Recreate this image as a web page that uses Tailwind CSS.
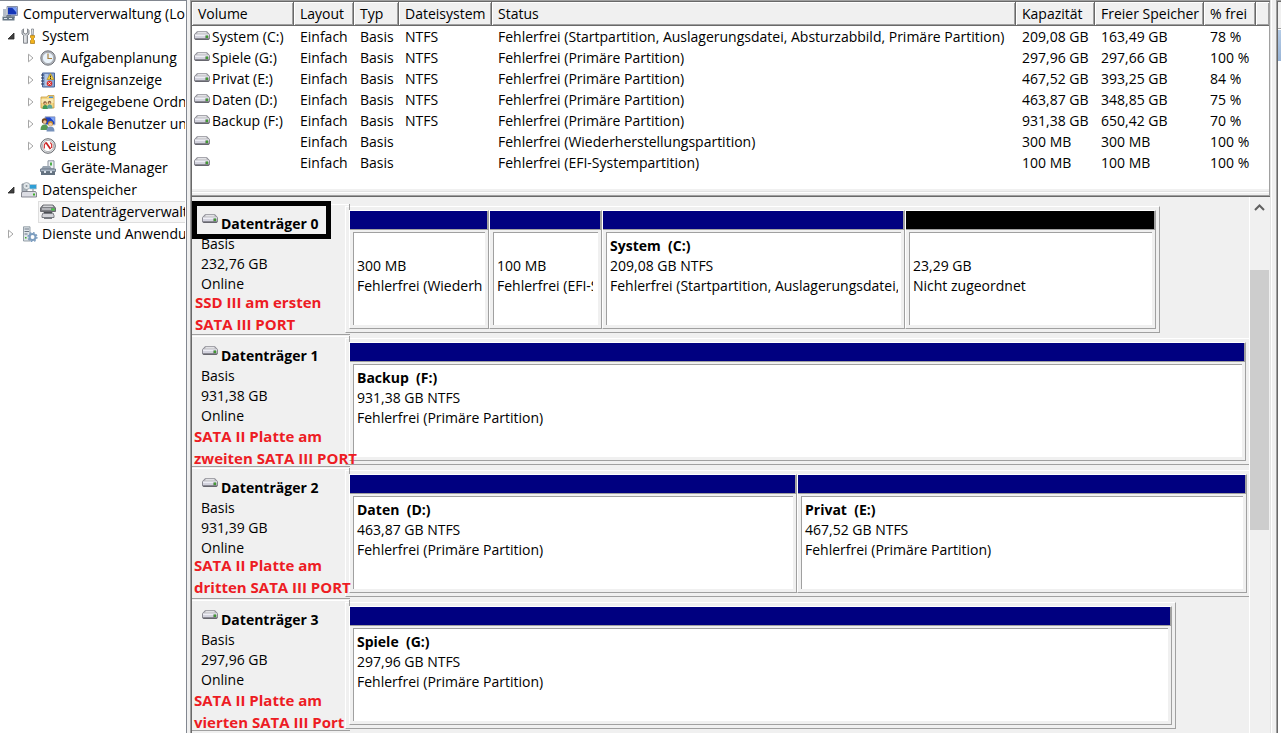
<!DOCTYPE html>
<html lang="de">
<head>
<meta charset="utf-8">
<title>Computerverwaltung</title>
<script src="https://cdn.jsdelivr.net/npm/@tailwindcss/browser@4"></script>
</head>
<body class="font-['Open_Sans','Noto_Sans',sans-serif] text-[14px] leading-5 text-black bg-[#f0f0f0]">
<svg class="hidden" aria-hidden="true">
  <symbol id="drive" viewBox="0 0 16 10">
    <path d="M3 .3h10L15.500 3 16 4v3.500L14.800 9H1.200L0 7.500V4l.5-1z" fill="#8a8a92"/>
    <path d="M3.500 1h9l2 2.200h-13z" fill="#c4c4c8"/>
    <path d="M4.200 1.200h7.600l.8 1H3.400z" fill="#ededf0"/>
    <path d="M1 3.500h14v4H1z" fill="#d3d3de"/>
    <path d="M1 3.500h14v1.300H1z" fill="#f6f6fa"/>
    <path d="M11 4.500h3.500v3H11z" fill="#8c9a8c"/><path d="M12.200 4.500h1.600v2.600h-1.600z" fill="#2f9a1e"/>
    <path d="M1 7.500h14L14.500 9h-13z" fill="#66666e"/>
  </symbol>
  <symbol id="closed" viewBox="0 0 8 10"><path d="M1.500 1.200v7.600L6 5z" fill="#fff" stroke="#a6a6a6"/></symbol>
  <symbol id="open" viewBox="0 0 8 8"><path d="M7 1v6H1z" fill="#404040" stroke="#262626" stroke-width=".8"/></symbol>
</svg>
<div class="flex h-screen overflow-hidden">

  <nav aria-label="Konsolenstruktur" class="w-[187px] shrink-0 bg-white border-t border-r border-[#828790] pr-px pt-[2px] leading-[22px] whitespace-nowrap">
    <ul class="overflow-hidden">
      <li class="flex h-[22px] items-center gap-1 pl-[2px]">
        <svg class="size-4 shrink-0" viewBox="0 0 16 16"><path d="M5 .5h10.500v9H5z" fill="#d8dce4" stroke="#8791a5"/><path d="M6 1.500h8.500v7H6z" fill="#1536b8"/><path d="M10 1.500h4.500v5z" fill="#7fa4f5"/><path d="M9 10h4v2H9z" fill="#a5acb8"/><path d="M1 3h3v7H1z" fill="#b4bcc8"/><path d="M.5 10.500h12v4H.5z" fill="#667684"/><path d="M4 9.500h5v1H4z" fill="#4c5a66"/><path d="M2 12h3v1H2zM7 12h3v1H7z" fill="#dfe6ec"/></svg>
        <span class="pl-px">Computerverwaltung (Lokal)</span></li>
      <li class="flex h-[22px] items-center pl-[7px]">
        <svg class="size-2 shrink-0"><use href="#open"/></svg>
        <svg class="ml-[6px] mr-[5px] size-4 shrink-0" viewBox="0 0 16 16"><path d="M2.500.8v4l2 1.200 2-1.200v-4L8 2.500V6L6.500 7.500V15.200h-4V7.500L1 6V2.500z" fill="#c9ccd0" stroke="#6d7279" stroke-width=".8"/><path d="M4 8v6.500" stroke="#f5f6f7"/><path d="M10.500 1h2l-.3 6h-1.400z" fill="#eef0f3" stroke="#6d727a" stroke-width=".7"/><path d="M9.500 7.500h4v2l-1 1v1l1 1v3h-4v-3l1-1v-1l-1-1z" fill="#f2b21c" stroke="#a8750b" stroke-width=".7"/></svg>
        <span>System</span></li>
      <li class="flex h-[22px] items-center pl-[27px]">
        <svg class="h-[10px] w-2 shrink-0"><use href="#closed"/></svg>
        <svg class="ml-[5px] mr-[5px] size-4 shrink-0" viewBox="0 0 16 16"><circle cx="8" cy="8" r="7.200" fill="#b5b8be" stroke="#6f7279"/><circle cx="8" cy="8" r="5.600" fill="#eaf3fb" stroke="#8f949b" stroke-width=".6"/><path d="M8 3.500v5h4" fill="none" stroke="#a88242" stroke-width="1.200"/></svg>
        <span>Aufgabenplanung</span></li>
      <li class="flex h-[22px] items-center pl-[27px]">
        <svg class="h-[10px] w-2 shrink-0"><use href="#closed"/></svg>
        <svg class="ml-[5px] mr-[5px] size-4 shrink-0" viewBox="0 0 16 16"><path d="M2.500 1h12v14h-12z" fill="#8aa5d2" stroke="#49659a"/><path d="M5 3h3M5 5h3M5 7h3M5 9h3M5 11h3M5 13h3" stroke="#dce7f6"/><path d="M1 3h3M1 6h3M1 9h3M1 12h3" stroke="#2c3b58"/><path d="M10.500 1.500l3.500 6H7z" fill="#f6cf3a" stroke="#b08a12" stroke-width=".6"/><path d="M10.500 3.500v2M10.500 6v1" stroke="#333"/><circle cx="9.500" cy="11.500" r="2.800" fill="#d93532"/><path d="M8.300 10.300l2.400 2.400m0-2.400l-2.400 2.400" stroke="#fff" stroke-width=".8"/></svg>
        <span>Ereignisanzeige</span></li>
      <li class="flex h-[22px] items-center pl-[27px]">
        <svg class="h-[10px] w-2 shrink-0"><use href="#closed"/></svg>
        <svg class="ml-[5px] mr-[5px] size-4 shrink-0" viewBox="0 0 16 16"><path d="M1 3h6l1-1.500h6V14H1z" fill="#f3d684" stroke="#c59b3d" stroke-width=".8"/><path d="M9 2.500h4V4H9z" fill="#4b8fd8"/><path d="M1.500 5h12v4h-12z" fill="#fae9b4"/><circle cx="5" cy="9" r="1.700" fill="#7a4f2c"/><circle cx="5.200" cy="9.600" r="1" fill="#eebf92"/><circle cx="9.500" cy="8.500" r="1.700" fill="#8a6038"/><circle cx="9.600" cy="9.200" r="1" fill="#eebf92"/><path d="M2.500 15q0-4 2.700-4T8 15z" fill="#3f9a55"/><path d="M7 14.500q0-4 2.700-4t2.800 4z" fill="#5aa79b"/></svg>
        <span>Freigegebene Ordner</span></li>
      <li class="flex h-[22px] items-center pl-[27px]">
        <svg class="h-[10px] w-2 shrink-0"><use href="#closed"/></svg>
        <svg class="ml-[5px] mr-[5px] size-4 shrink-0" viewBox="0 0 16 16"><path d="M5 .8h10v8H5z" fill="#1d43c4" stroke="#aab3c3"/><path d="M10 1.300h4.500v5z" fill="#85a8f6"/><circle cx="4.500" cy="5" r="2.700" fill="#70451f"/><circle cx="4.800" cy="6" r="1.700" fill="#eebf92"/><circle cx="10.500" cy="7.500" r="2.500" fill="#c89034"/><circle cx="10.500" cy="8.300" r="1.600" fill="#f2caa0"/><path d="M.5 14q0-5.500 4-5.500t4 5.500z" fill="#579a54"/><path d="M6.500 15.500q0-5 4-5t4 5z" fill="#7792bb"/></svg>
        <span>Lokale Benutzer und Gruppen</span></li>
      <li class="flex h-[22px] items-center pl-[27px]">
        <svg class="h-[10px] w-2 shrink-0"><use href="#closed"/></svg>
        <svg class="ml-[5px] mr-[5px] size-4 shrink-0" viewBox="0 0 16 16"><circle cx="8" cy="8" r="7.300" fill="#e4e6e8" stroke="#66696e"/><circle cx="8" cy="8" r="5.600" fill="#fff" stroke="#8a8d91" stroke-width=".6"/><path d="M4.300 10.500V7l1.500-2.500M11.700 10V6.500l-1.500-2" fill="none" stroke="#d02c2c" stroke-width="1.200"/><path d="M6 4.500l4.500 6.500" stroke="#c71f1f" stroke-width="1.700"/></svg>
        <span>Leistung</span></li>
      <li class="flex h-[22px] items-center pl-[40px]">
        <svg class="mr-[5px] size-4 shrink-0" viewBox="0 0 16 16"><path d="M8 .8h6v8H8z" fill="#eceff2" stroke="#8a939e"/><path d="M10 2.500h2v3h-2z" fill="#4fae4a"/><path d="M3 6h7l2 3H1z" fill="#98a4b1"/><path d="M.5 9h15v2.500H.5z" fill="#a8b5c3" stroke="#5f6d7d" stroke-width=".8"/><path d="M1 11.500h14V15H1z" fill="#63717f"/><path d="M4 11h2v2H4zM10 11h2v2h-2z" fill="#dbe2ea"/></svg>
        <span>Geräte-Manager</span></li>
      <li class="flex h-[22px] items-center pl-[7px]">
        <svg class="size-2 shrink-0"><use href="#open"/></svg>
        <svg class="ml-[6px] mr-[5px] size-4 shrink-0" viewBox="0 0 16 16"><path d="M1 2h5v9H1z" fill="#aeb6be" stroke="#7a848e" stroke-width=".8"/><circle cx="5.500" cy="4" r="3.500" fill="#e1e6e9" stroke="#8b959c" stroke-width=".7"/><circle cx="5.500" cy="4" r="1" fill="#8b959c"/><path d="M8.500 2.500h7v4.500h-7z" fill="#2f9fd6" stroke="#b9c8d0" stroke-width=".8"/><path d="M11 7.500h2v1h-2z" fill="#7f8a92"/><path d="M1.500 9.500h13l1 1.500v4H.5v-4z" fill="#dcdde4" stroke="#6c6f78" stroke-width=".8"/><path d="M12 11.500h2v2h-2z" fill="#3fae2a"/></svg>
        <span>Datenspeicher</span></li>
      <li class="pl-[38px]"><div class="flex h-[22px] items-center border border-[#dedede] border-r-0 bg-[#f6f6f6] pl-px">
        <svg class="mr-[5px] size-4 shrink-0" viewBox="0 0 16 16"><path d="M3 1h10l2.500 3v3.500H.5V4z" fill="#7e8085" stroke="#55575c" stroke-width=".8"/><path d="M3.500 1.500h9l1 1.500h-11z" fill="#d4d5d8"/><path d="M2 4.500h9v1H2z" fill="#e8e8ec"/><path d="M11.500 4.500h3v2h-3z" fill="#3fd13a"/><path d="M3 9h10l1 2.500v2H2v-2z" fill="#d3d4d9" stroke="#606268" stroke-width=".8"/><path d="M4 8h8v1.500H4z" fill="#4d4f54"/><path d="M4 13h8v2H4z" fill="#777a80"/></svg>
        <span>Datenträgerverwaltung</span></div></li>
      <li class="flex h-[22px] items-center pl-[7px]">
        <svg class="h-[10px] w-2 shrink-0"><use href="#closed"/></svg>
        <svg class="ml-[7px] mr-[4px] size-4 shrink-0" viewBox="0 0 16 16"><path d="M1.500.8h6.500V15H1.500z" fill="#dfe5ea" stroke="#7f8b96" stroke-width=".8"/><path d="M2.500 3h4.500M2.500 5.500h4.500M2.500 8h3" stroke="#6c7985"/><path d="M3 11h1.500v1.500H3z" fill="#3fae2a"/><circle cx="10.500" cy="11" r="3" fill="none" stroke="#7c9dbf" stroke-width="2"/><circle cx="10.500" cy="11" r="4.400" fill="none" stroke="#7c9dbf" stroke-width="1.400" stroke-dasharray="1.700 1.750"/></svg>
        <span>Dienste und Anwendungen</span></li>
    </ul>
  </nav>

  <main class="ml-[3px] flex min-w-0 flex-1 flex-col border-l border-t border-[#a0a0a0]">
   <div class="flex min-h-0 flex-1 flex-col border-l border-t border-[#696969]">
    <section class="h-[195px] shrink-0 border-b border-[#696969]">
     <div class="flex h-full flex-col border-b border-r border-[#a0a0a0]">
      <div class="h-[187px] overflow-hidden bg-white">
      <table class="w-full table-fixed border-separate border-spacing-0 whitespace-nowrap text-left">
        <colgroup><col class="w-[102px]"><col class="w-[60px]"><col class="w-[45px]"><col class="w-[93px]"><col><col class="w-[79px]"><col class="w-[109px]"><col class="w-[52px]"><col class="w-[13px]"></colgroup>
        <thead class="[&_th]:h-6 [&_th]:border-b [&_th]:border-r [&_th]:border-[#696969] [&_th]:bg-[#f0f0f0] [&_th]:p-0 [&_th]:pl-[6px] [&_th]:font-normal [&_th]:shadow-[inset_1px_1px_0_#fff,inset_-1px_-1px_0_#a0a0a0] [&_th:last-child]:border-r-0">
          <tr><th>Volume</th><th>Layout</th><th>Typ</th><th>Dateisystem</th><th>Status</th><th>Kapazität</th><th>Freier Speicher</th><th>% frei</th><th aria-label="Leer"></th></tr>
        </thead>
        <tbody class="[&_td]:h-[21px] [&_td]:p-0 [&_td]:pl-[6px] [&_td:first-child]:pl-[2px] [&_svg]:mr-[2px] [&_svg]:mb-1 [&_svg]:inline-block [&_svg]:h-[10px] [&_svg]:w-4">
          <tr><td><svg><use href="#drive"/></svg>System (C:)</td><td>Einfach</td><td>Basis</td><td>NTFS</td><td>Fehlerfrei (Startpartition, Auslagerungsdatei, Absturzabbild, Primäre Partition)</td><td>209,08 GB</td><td>163,49 GB</td><td>78 %</td></tr>
          <tr><td><svg><use href="#drive"/></svg>Spiele (G:)</td><td>Einfach</td><td>Basis</td><td>NTFS</td><td>Fehlerfrei (Primäre Partition)</td><td>297,96 GB</td><td>297,66 GB</td><td>100 %</td></tr>
          <tr><td><svg><use href="#drive"/></svg>Privat (E:)</td><td>Einfach</td><td>Basis</td><td>NTFS</td><td>Fehlerfrei (Primäre Partition)</td><td>467,52 GB</td><td>393,25 GB</td><td>84 %</td></tr>
          <tr><td><svg><use href="#drive"/></svg>Daten (D:)</td><td>Einfach</td><td>Basis</td><td>NTFS</td><td>Fehlerfrei (Primäre Partition)</td><td>463,87 GB</td><td>348,85 GB</td><td>75 %</td></tr>
          <tr><td><svg><use href="#drive"/></svg>Backup (F:)</td><td>Einfach</td><td>Basis</td><td>NTFS</td><td>Fehlerfrei (Primäre Partition)</td><td>931,38 GB</td><td>650,42 GB</td><td>70 %</td></tr>
          <tr><td><svg><use href="#drive"/></svg></td><td>Einfach</td><td>Basis</td><td></td><td>Fehlerfrei (Wiederherstellungspartition)</td><td>300 MB</td><td>300 MB</td><td>100 %</td></tr>
          <tr><td><svg><use href="#drive"/></svg></td><td>Einfach</td><td>Basis</td><td></td><td>Fehlerfrei (EFI-Systempartition)</td><td>100 MB</td><td>100 MB</td><td>100 %</td></tr>
        </tbody>
      </table>
      </div>
      <div class="mt-[2px] h-[2px] border-t border-[#e3e3e3] bg-white"></div>
     </div>
    </section>

    <div class="flex min-h-0 flex-1">
      <div class="min-w-0 flex-1 overflow-hidden pt-[7px] whitespace-nowrap">

        <section class="relative flex h-[132px]">
          <div class="h-[131px] w-[158px] shrink-0 border-b border-t border-t-white border-b-[#a0a0a0] pl-[9px] pt-[9px]">
            <h2 class="flex h-5 gap-[3px] pl-px font-bold"><svg class="h-[10px] w-4"><use href="#drive"/></svg>Datenträger 0</h2>
            <p>Basis</p><p>232,76 GB</p><p>Online</p>
          </div>
          <div class="-ml-[5px] mr-[89px] mt-[2px] flex h-[127px] min-w-0 flex-1 border border-white border-b-[#a0a0a0] border-r-[#a0a0a0] bg-[#f0f0f0] p-[3px]">
            <div class="flex min-w-0 flex-[138] flex-col border border-white border-b-[#a0a0a0] border-r-[#a0a0a0]">
              <div class="h-[19px] border-b border-r border-[#a0a0a0] bg-[#000080]"></div>
              <div class="mx-[3px] mb-[3px] mt-[2px] flex-1 border-l border-t border-[#a0a0a0] bg-white px-[3px] pt-[3px]"><div class="overflow-hidden pt-5"><p>300 MB</p><p>Fehlerfrei (Wiederherstellungspartition)</p></div></div>
            </div>
            <div class="flex min-w-0 flex-[111] flex-col border border-white border-b-[#a0a0a0] border-r-[#a0a0a0]">
              <div class="h-[19px] border-b border-r border-[#a0a0a0] bg-[#000080]"></div>
              <div class="mx-[3px] mb-[3px] mt-[2px] flex-1 border-l border-t border-[#a0a0a0] bg-white pl-[3px] pr-[5px] pt-[3px]"><div class="overflow-hidden pt-5"><p>100 MB</p><p>Fehlerfrei (EFI-Systempartition)</p></div></div>
            </div>
            <div class="flex min-w-0 flex-[301] flex-col border border-white border-b-[#a0a0a0] border-r-[#a0a0a0]">
              <div class="h-[19px] border-b border-r border-[#a0a0a0] bg-[#000080]"></div>
              <div class="mx-[3px] mb-[3px] mt-[2px] flex-1 border-l border-t border-[#a0a0a0] bg-white px-[3px] pt-[3px]"><div class="overflow-hidden"><h3 class="font-bold">System&nbsp; (C:)</h3><p>209,08 GB NTFS</p><p>Fehlerfrei (Startpartition, Auslagerungsdatei, Absturzabbild)</p></div></div>
            </div>
            <div class="flex min-w-0 flex-[249] flex-col border border-white border-b-[#a0a0a0] border-r-[#a0a0a0]">
              <div class="h-[19px] border-b border-r border-[#a0a0a0] bg-black"></div>
              <div class="mx-[3px] mb-[3px] mt-[2px] flex-1 border-l border-t border-[#a0a0a0] bg-white px-[3px] pt-[3px]"><div class="overflow-hidden pt-5"><p>23,29 GB</p><p>Nicht zugeordnet</p></div></div>
            </div>
          </div>
          <div class="absolute left-[157px] top-0 h-[6px] border-l border-dashed border-[#a0a0a0]"></div>
          <div class="absolute left-0 -top-[3px] h-[38px] w-[139px] border-[5px] border-black"></div>
          <p class="absolute left-[3px] top-[87px] text-[15px] font-bold leading-[22px] text-[#ed1c24]">SSD III am ersten<br>SATA III PORT</p>
        </section>

        <section class="relative flex h-[132px]">
          <div class="h-[131px] w-[158px] shrink-0 border-b border-t border-t-white border-b-[#a0a0a0] pl-[9px] pt-[9px]">
            <h2 class="flex h-5 gap-[3px] pl-px font-bold"><svg class="h-[10px] w-4"><use href="#drive"/></svg>Datenträger 1</h2>
            <p>Basis</p><p>931,38 GB</p><p>Online</p>
          </div>
          <div class="-ml-[5px] mt-[2px] flex h-[127px] min-w-0 flex-1 border border-r-0 border-white border-b-[#a0a0a0] bg-[#f0f0f0] p-[3px]">
            <div class="flex min-w-0 flex-1 flex-col border border-white border-b-[#a0a0a0] border-r-[#a0a0a0]">
              <div class="h-[19px] border-b border-r border-[#a0a0a0] bg-[#000080]"></div>
              <div class="mx-[3px] mb-[3px] mt-[2px] flex-1 border-l border-t border-[#a0a0a0] bg-white px-[3px] pt-[3px]"><h3 class="font-bold">Backup&nbsp; (F:)</h3><p>931,38 GB NTFS</p><p>Fehlerfrei (Primäre Partition)</p></div>
            </div>
          </div>
          <div class="absolute left-[157px] top-0 h-[6px] border-l border-dashed border-[#a0a0a0]"></div>
          <p class="absolute left-[2px] top-[89px] text-[15px] font-bold leading-[22px] text-[#ed1c24]">SATA II Platte am<br>zweiten SATA III PORT</p>
        </section>

        <section class="relative flex h-[132px]">
          <div class="h-[131px] w-[158px] shrink-0 border-b border-t border-t-white border-b-[#a0a0a0] pl-[9px] pt-[9px]">
            <h2 class="flex h-5 gap-[3px] pl-px font-bold"><svg class="h-[10px] w-4"><use href="#drive"/></svg>Datenträger 2</h2>
            <p>Basis</p><p>931,39 GB</p><p>Online</p>
          </div>
          <div class="-ml-[5px] mt-[2px] flex h-[127px] min-w-0 flex-1 border border-r-0 border-white border-b-[#a0a0a0] bg-[#f0f0f0] p-[3px] pr-[2px]">
            <div class="flex min-w-0 flex-[448] flex-col border border-white border-b-[#a0a0a0] border-r-[#a0a0a0]">
              <div class="h-[19px] border-b border-r border-[#a0a0a0] bg-[#000080]"></div>
              <div class="mx-[3px] mb-[3px] mt-[2px] flex-1 border-l border-t border-[#a0a0a0] bg-white px-[3px] pt-[3px]"><h3 class="font-bold">Daten&nbsp; (D:)</h3><p>463,87 GB NTFS</p><p>Fehlerfrei (Primäre Partition)</p></div>
            </div>
            <div class="flex min-w-0 flex-[450] flex-col border border-white border-b-[#a0a0a0] border-r-[#a0a0a0]">
              <div class="h-[19px] border-b border-r border-[#a0a0a0] bg-[#000080]"></div>
              <div class="mx-[3px] mb-[3px] mt-[2px] flex-1 border-l border-t border-[#a0a0a0] bg-white px-[3px] pt-[3px]"><h3 class="font-bold">Privat&nbsp; (E:)</h3><p>467,52 GB NTFS</p><p>Fehlerfrei (Primäre Partition)</p></div>
            </div>
          </div>
          <div class="absolute left-[157px] top-0 h-[6px] border-l border-dashed border-[#a0a0a0]"></div>
          <p class="absolute left-[2px] top-[86px] text-[15px] font-bold leading-[22px] text-[#ed1c24]">SATA II Platte am<br>dritten SATA III PORT</p>
        </section>

        <section class="relative flex h-[132px]">
          <div class="h-[131px] w-[158px] shrink-0 border-b border-t border-t-white border-b-[#a0a0a0] pl-[9px] pt-[9px]">
            <h2 class="flex h-5 gap-[3px] pl-px font-bold"><svg class="h-[10px] w-4"><use href="#drive"/></svg>Datenträger 3</h2>
            <p>Basis</p><p>297,96 GB</p><p>Online</p>
          </div>
          <div class="-ml-[5px] mr-[73px] mt-[2px] flex h-[127px] min-w-0 flex-1 border border-white border-b-[#a0a0a0] border-r-[#a0a0a0] bg-[#f0f0f0] p-[3px]">
            <div class="flex min-w-0 flex-1 flex-col border border-white border-b-[#a0a0a0] border-r-[#a0a0a0]">
              <div class="h-[19px] border-b border-r border-[#a0a0a0] bg-[#000080]"></div>
              <div class="mx-[3px] mb-[3px] mt-[2px] flex-1 border-l border-t border-[#a0a0a0] bg-white px-[3px] pt-[3px]"><h3 class="font-bold">Spiele&nbsp; (G:)</h3><p>297,96 GB NTFS</p><p>Fehlerfrei (Primäre Partition)</p></div>
            </div>
          </div>
          <div class="absolute left-[157px] top-0 h-[6px] border-l border-dashed border-[#a0a0a0]"></div>
          <p class="absolute left-[2px] top-[89px] text-[15px] font-bold leading-[22px] text-[#ed1c24]">SATA II Platte am<br>vierten SATA III Port</p>
        </section>
      </div>

      <div class="flex w-[21px] shrink-0 flex-col border-l border-white pr-px">
        <button type="button" aria-label="Nach oben" class="flex h-[21px] items-center justify-center"><svg class="h-[9px] w-[11px]" viewBox="0 0 11 9"><path d="M1 7l4.500-4.500L10 7" fill="none" stroke="#606060" stroke-width="2"/></svg></button>
        <div class="mt-[52px] h-[260px] w-[19px] bg-[#cdcdcd]"></div>
      </div>
    </div>
   </div>
  </main>

  <aside class="flex w-[11px] shrink-0 border-l border-[#e3e3e3]">
    <div class="w-[5px] border-l border-white"></div>
    <div class="flex-1 border-l border-t border-[#a0a0a0]">
      <div class="h-full border-l border-t border-[#696969] bg-white">
        <div class="h-[27px] border-b border-[#a0a0a0] bg-[#f0f0f0]"></div>
        <div class="mt-px h-[31px] bg-linear-to-b from-[#b4cbe6] to-[#98b4d6]"></div>
      </div>
    </div>
  </aside>
</div>
</body>
</html>
